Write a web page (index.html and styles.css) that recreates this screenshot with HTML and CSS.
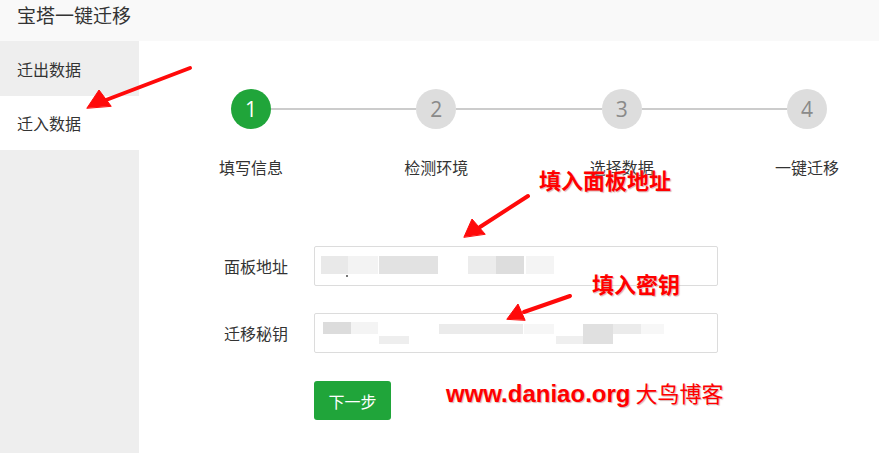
FILE: index.html
```html
<!DOCTYPE html>
<html lang="zh-CN">
<head>
<meta charset="utf-8">
<title>宝塔一键迁移</title>
<link rel="stylesheet" href="styles.css">
</head>
<body>
<div class="page">
  <header class="topbar">宝塔一键迁移</header>
  <div class="body">
    <nav class="sidebar">
      <div class="nav-item">迁出数据</div>
      <div class="nav-item active">迁入数据</div>
    </nav>
    <main class="main">
      <div class="steps">
        <div class="step-circle done">1</div>
        <div class="step-line"></div>
        <div class="step-circle">2</div>
        <div class="step-line"></div>
        <div class="step-circle">3</div>
        <div class="step-line"></div>
        <div class="step-circle">4</div>
        <div class="step-label"><span>填写信息</span></div>
        <div></div>
        <div class="step-label"><span>检测环境</span></div>
        <div></div>
        <div class="step-label"><span>选择数据</span></div>
        <div></div>
        <div class="step-label"><span>一键迁移</span></div>
      </div>
      <form class="form">
        <div class="form-row first">
          <label class="form-label">面板地址</label>
          <div class="input">
            <svg class="blur" width="402" height="38" viewBox="0 0 402 38">
              <rect x="6" y="9" width="27" height="18" fill="#e9e9e9"/>
              <rect x="33" y="9" width="30" height="18" fill="#f3f3f3"/>
              <rect x="64" y="9" width="59" height="18" fill="#e2e2e2"/>
              <rect x="153" y="9" width="28" height="18" fill="#ececec"/>
              <rect x="181" y="9" width="28" height="18" fill="#dddddd"/>
              <rect x="211" y="9" width="28" height="18" fill="#f4f4f4"/>
              <rect x="31" y="28" width="2" height="2" fill="#777"/>
            </svg>
          </div>
        </div>
        <div class="form-row">
          <label class="form-label">迁移秘钥</label>
          <div class="input">
            <svg class="blur" width="402" height="38" viewBox="0 0 402 38">
              <rect x="8" y="8" width="28" height="12" fill="#dcdcdc"/>
              <rect x="36" y="8" width="27" height="12" fill="#f4f4f4"/>
              <rect x="64" y="22" width="30" height="8" fill="#eeeeee"/>
              <rect x="124" y="10" width="84" height="10" fill="#ebebeb"/>
              <rect x="209" y="10" width="30" height="10" fill="#f6f6f6"/>
              <rect x="241" y="22" width="27" height="8" fill="#efefef"/>
              <rect x="268" y="10" width="30" height="20" fill="#e0e0e0"/>
              <rect x="298" y="10" width="28" height="10" fill="#ebebeb"/>
              <rect x="326" y="10" width="23" height="10" fill="#f7f7f7"/>
            </svg>
          </div>
        </div>
        <div class="form-row actions">
          <button type="button" class="btn">下一步</button>
        </div>
      </form>
    </main>
  </div>

  <div class="note note-addr">填入面板地址</div>
  <div class="note note-key">填入密钥</div>
  <div class="note note-site"><span class="site-latin">www.daniao.org</span> 大鸟博客</div>

  <svg class="arrows" width="879" height="453" viewBox="0 0 879 453">
    <g fill="#ff0a0a" stroke="#ff0a0a" stroke-linecap="round" stroke-linejoin="round">
      <line x1="190" y1="68" x2="106" y2="100" stroke-width="4"/>
      <polygon points="87,108 99,90 111,106" stroke-width="1"/>
      <line x1="528" y1="196" x2="480" y2="227" stroke-width="4"/>
      <polygon points="464,237 472,219 485,234" stroke-width="1"/>
      <line x1="570" y1="296" x2="524" y2="312" stroke-width="4"/>
      <polygon points="507,319 518,304 525,320" stroke-width="1"/>
    </g>
  </svg>
</div>
</body>
</html>
```
FILE: styles.css
```css
* { box-sizing: border-box; }
html, body { margin: 0; padding: 0; }
body {
  font-family: "Noto Sans CJK SC", "Liberation Sans", sans-serif;
  color: #333;
  background: #fff;
}
.page {
  position: relative;
  width: 879px;
  height: 453px;
  overflow: hidden;
}
.topbar {
  height: 41px;
  background: #f9f9f9;
  padding-left: 17px;
  font-size: 19px;
  line-height: 30px;
  color: #333;
}
.body {
  display: flex;
  height: 412px;
}
.sidebar {
  width: 139px;
  background: #eeeeee;
  padding-top: 1px;
}
.nav-item {
  height: 54px;
  padding-left: 17px;
  font-size: 16px;
  line-height: 54px;
  color: #333;
}
.nav-item.active { background: #fff; }
.main {
  flex: 1;
  background: #fff;
  padding-top: 48px;
}
.steps {
  display: grid;
  grid-template-columns: 40px 1fr 40px 1fr 40px 1fr 40px;
  grid-template-rows: 40px auto;
  row-gap: 27px;
  align-items: center;
  width: 596px;
  margin-left: 92px;
}
.step-circle {
  width: 40px;
  height: 40px;
  border-radius: 50%;
  background: #dddddd;
  color: #8a8a8a;
  font-family: "Open Sans", "Liberation Sans", sans-serif;
  font-size: 21px;
  line-height: 40px;
  text-align: center;
}
.step-circle.done {
  background: #20a53a;
  color: #fff;
}
.step-line {
  height: 2px;
  background: #cccccc;
}
.step-label {
  display: flex;
  justify-content: center;
  font-size: 16px;
  line-height: 22px;
  color: #333;
  white-space: nowrap;
}
.form {
  margin-top: 68px;
}
.form-row {
  display: flex;
  align-items: center;
  margin-top: 27px;
}
.form-row.first { margin-top: 0; }
.form-row.actions { margin-top: 28px; padding-left: 175px; }
.form-label {
  width: 149px;
  text-align: right;
  font-size: 16px;
  color: #333;
}
.input {
  width: 404px;
  height: 40px;
  margin-left: 26px;
  border: 1px solid #dcdcdc;
  border-radius: 2px;
  background: #fff;
}
.blur {
  display: block;
  filter: blur(0.6px);
}
.btn {
  width: 77px;
  height: 39px;
  border: none;
  border-radius: 3px;
  background: #20a53a;
  color: #fff;
  font-family: "Noto Sans CJK SC", sans-serif;
  font-size: 16px;
  padding: 0;
}
.note {
  position: absolute;
  color: #ff0000;
  font-weight: 700;
  white-space: nowrap;
  text-shadow: 1px 1px 1px rgba(120, 0, 0, 0.3), 0 0 2px rgba(255, 255, 255, 0.9);
}
.note-addr {
  left: 539px;
  top: 164px;
  font-size: 22px;
  line-height: 30px;
}
.note-key {
  left: 592px;
  top: 268px;
  font-size: 22px;
  line-height: 30px;
}
.note-site {
  left: 446px;
  top: 377px;
  font-size: 22px;
  line-height: 30px;
  font-weight: 400;
}
.site-latin {
  font-family: "Liberation Sans", Arial, sans-serif;
  font-weight: 700;
  font-size: 24px;
}
.arrows {
  position: absolute;
  left: 0;
  top: 0;
  pointer-events: none;
}
```
